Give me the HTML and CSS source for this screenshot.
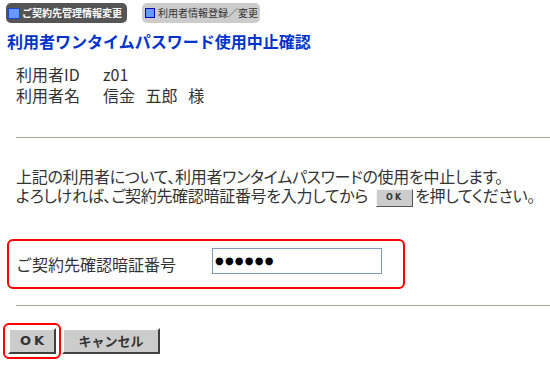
FILE: index.html
```html
<!DOCTYPE html>
<html lang="ja">
<head>
<meta charset="utf-8">
<title>利用者ワンタイムパスワード使用中止確認</title>
<link rel="stylesheet" href="styles.css">
</head>
<body>
<div class="tabs">
  <div class="tab tab-active"><span class="sq"></span>ご契約先管理情報変更</div>
  <div class="tab tab-inactive"><span class="sq"></span>利用者情報登録／変更</div>
</div>
<h1 class="title">利用者ワンタイムパスワード使用中止確認</h1>
<dl class="info">
  <dt>利用者ID</dt><dd class="uid">z01</dd>
  <dt>利用者名</dt><dd class="uname">信金 五郎 様</dd>
</dl>
<hr class="rule rule-top">
<p class="msg">上記の利用者について、利用者ワンタイムパスワードの使用を中止します。<br>よろしければ、ご契約先確認暗証番号を入力してから<span class="mini-btn">OK</span>を押してください。</p>
<div class="pin-box">
  <label class="pin-label" for="pin">ご契約先確認暗証番号</label>
  <input class="pin-input" id="pin" type="text" value="●●●●●●" readonly>
</div>
<hr class="rule rule-bottom">
<div class="actions">
  <div class="ok-wrap"><button class="btn btn-ok" type="button">OK</button></div>
  <button class="btn btn-cancel" type="button">キャンセル</button>
</div>
</body>
</html>
```

FILE: styles.css
```css
body {
  margin: 0;
  background: #fff;
  color: #333;
  font-family: "Noto Sans CJK JP", sans-serif;
}

.tabs {
  display: flex;
  gap: 15px;
  padding: 3px 0 0 6px;
}

.tab {
  height: 20px;
  box-sizing: border-box;
  border-radius: 5px;
  display: flex;
  align-items: center;
  font-size: 10px;
  line-height: 20px;
  white-space: nowrap;
}

.tab-active {
  width: 121px;
  padding-left: 2px;
  background: #555;
  color: #fff;
  font-weight: bold;
}

.tab-active .sq {
  width: 12px;
  height: 11px;
  margin-right: 2px;
  box-sizing: border-box;
  background: #6699ff;
  border: 1px solid #2244cc;
}

.tab-inactive {
  width: 118px;
  padding-left: 3px;
  background: #cccccc;
  color: #333;
}

.tab-inactive .sq {
  width: 10px;
  height: 10px;
  margin-right: 3px;
  box-sizing: border-box;
  background: #6699ff;
  border: 1px solid #0000cc;
}

.title {
  margin: 8px 0 0 7px;
  font-size: 16px;
  line-height: 20px;
  font-weight: bold;
  color: #0033cc;
}

.info {
  display: grid;
  grid-template-columns: 87px auto;
  margin: 13px 0 0 16px;
  font-size: 16px;
  line-height: 21px;
}

.info dt,
.info dd {
  margin: 0;
}

.uname {
  word-spacing: 7px;
}

.rule {
  border: 0;
  height: 1px;
  background: #a4a494;
  margin: 0 0 0 16px;
}

.rule-top {
  margin-top: 31px;
}

.msg {
  margin: 29px 0 0 16px;
  font-size: 16px;
  line-height: 19px;
  letter-spacing: -0.3px;
  white-space: nowrap;
  font-feature-settings: "palt";
}

.mini-btn {
  display: inline-block;
  width: 37px;
  height: 18px;
  box-sizing: border-box;
  margin: 0 2px 0 8px;
  vertical-align: middle;
  background: #cccccc;
  border: 1px solid;
  border-color: #f4f4f4 #555 #555 #f4f4f4;
  font-family: "DejaVu Sans", sans-serif;
  font-size: 8px;
  font-weight: bold;
  letter-spacing: 2px;
  line-height: 16px;
  text-align: center;
  color: #333;
}

.pin-box {
  display: flex;
  align-items: flex-start;
  width: 398px;
  height: 50px;
  box-sizing: border-box;
  margin: 32px 0 0 7px;
  padding-left: 7px;
  border: 2px solid #ff0000;
  border-radius: 6px;
}

.pin-label {
  width: 196px;
  margin-top: 13px;
  font-size: 16px;
  line-height: 21px;
}

.pin-input {
  width: 170px;
  height: 26px;
  box-sizing: border-box;
  margin: 7px 0 0 0;
  padding: 0 2px;
  border: 1px solid #7f9db9;
  outline: none;
  font-family: "DejaVu Sans", sans-serif;
  font-size: 10px;
  letter-spacing: 1.2px;
  color: #000;
}

.rule-bottom {
  margin-top: 16px;
}

.actions {
  display: flex;
  align-items: center;
  margin-top: 17px;
  padding-left: 3px;
}

.ok-wrap {
  padding: 3px;
  border: 2px solid #ff0000;
  border-radius: 6px;
  display: flex;
}

.btn {
  height: 26px;
  box-sizing: border-box;
  padding: 0;
  background: #cccccc;
  border: 2px solid;
  border-color: #ffffff #404040 #404040 #ffffff;
  font-family: "Noto Sans CJK JP", sans-serif;
  font-size: 13px;
  font-weight: bold;
  color: #333;
}

.btn-ok {
  width: 48px;
  letter-spacing: 3px;
  text-indent: 3px;
  font-family: "DejaVu Sans", sans-serif;
}

.btn-cancel {
  width: 98px;
  margin-left: 1px;
}
```
